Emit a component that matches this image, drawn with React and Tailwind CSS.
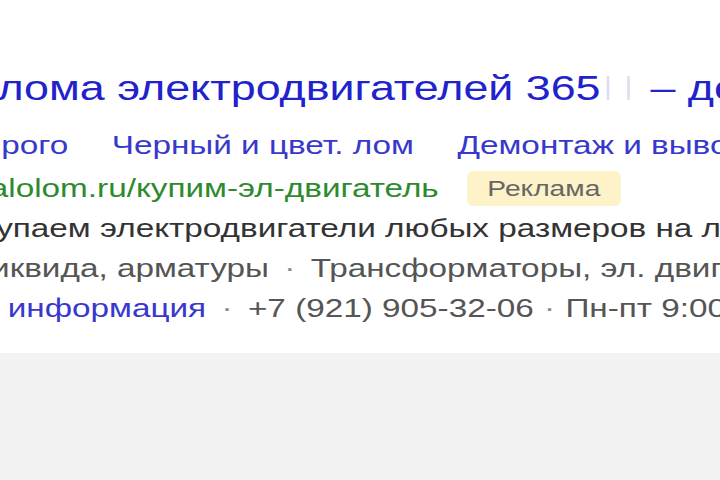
import React from 'react';

const Dot = ({ className = 'px-[12px]' }) => <span className={`text-[#8a8a8a] ${className}`}>·</span>;

export default function App() {
  return (
    <div className="w-[720px] h-[480px] overflow-hidden bg-[#f2f2f2] font-['Liberation_Sans',Arial,sans-serif]">
      <div className="h-[353px] bg-white pt-[64px] whitespace-nowrap overflow-hidden">
        {/* скриншот растянут по горизонтали */}
        <div className="origin-left scale-x-[1.28]">
          {/* Заголовок объявления */}
          <div className="text-[35px] leading-[48px] text-[#2222cc] -ml-[2px] flex items-center">
            <span>лома электродвигателей 365</span>
            <span className="inline-block w-[2px] h-[24px] bg-[#dcdcf2] ml-[5px]"></span>
            <span className="inline-block w-[2px] h-[24px] bg-[#dcdcf2] ml-[14px]"></span>
            <span className="ml-[16px]">– демонтаж</span>
          </div>

          {/* Быстрые ссылки */}
          <div className="mt-[13px] text-[26px] leading-[40px] text-[#3838cc] flex gap-[34px] ml-[1px]">
            <span>рого</span>
            <span>Черный и цвет. лом</span>
            <span>Демонтаж и вывоз</span>
          </div>

          <div className="mt-[3px] text-[26px] leading-[40px] flex items-center">
            <span className="text-[#2e8a2e] -ml-[8px]">alolom.ru/купим-эл-двигатель</span>
            <span className="ml-[22px] h-[35px] px-[16px] rounded-[5px] bg-[#fdf2c8] text-[#666] text-[22px] leading-[35px]">Реклама</span>
          </div>

          <div className="text-[26px] leading-[40px] text-[#333] -ml-[3px]">
            упаем электродвигатели любых размеров на лом
          </div>

          <div className="text-[26px] leading-[40px] text-[#555] -ml-[7px]">
            иквида, арматуры<Dot className="px-[12px]" />Трансформаторы, эл. двигатели
          </div>

          <div className="text-[26px] leading-[40px] text-[#555] pl-[6px]">
            <span className="text-[#3838cc]">информация</span><Dot className="px-[12px]" />+7 (921) 905-32-06<Dot className="px-[8px]" />Пн-пт 9:00-18:00
          </div>
        </div>
      </div>
    </div>
  );
}
